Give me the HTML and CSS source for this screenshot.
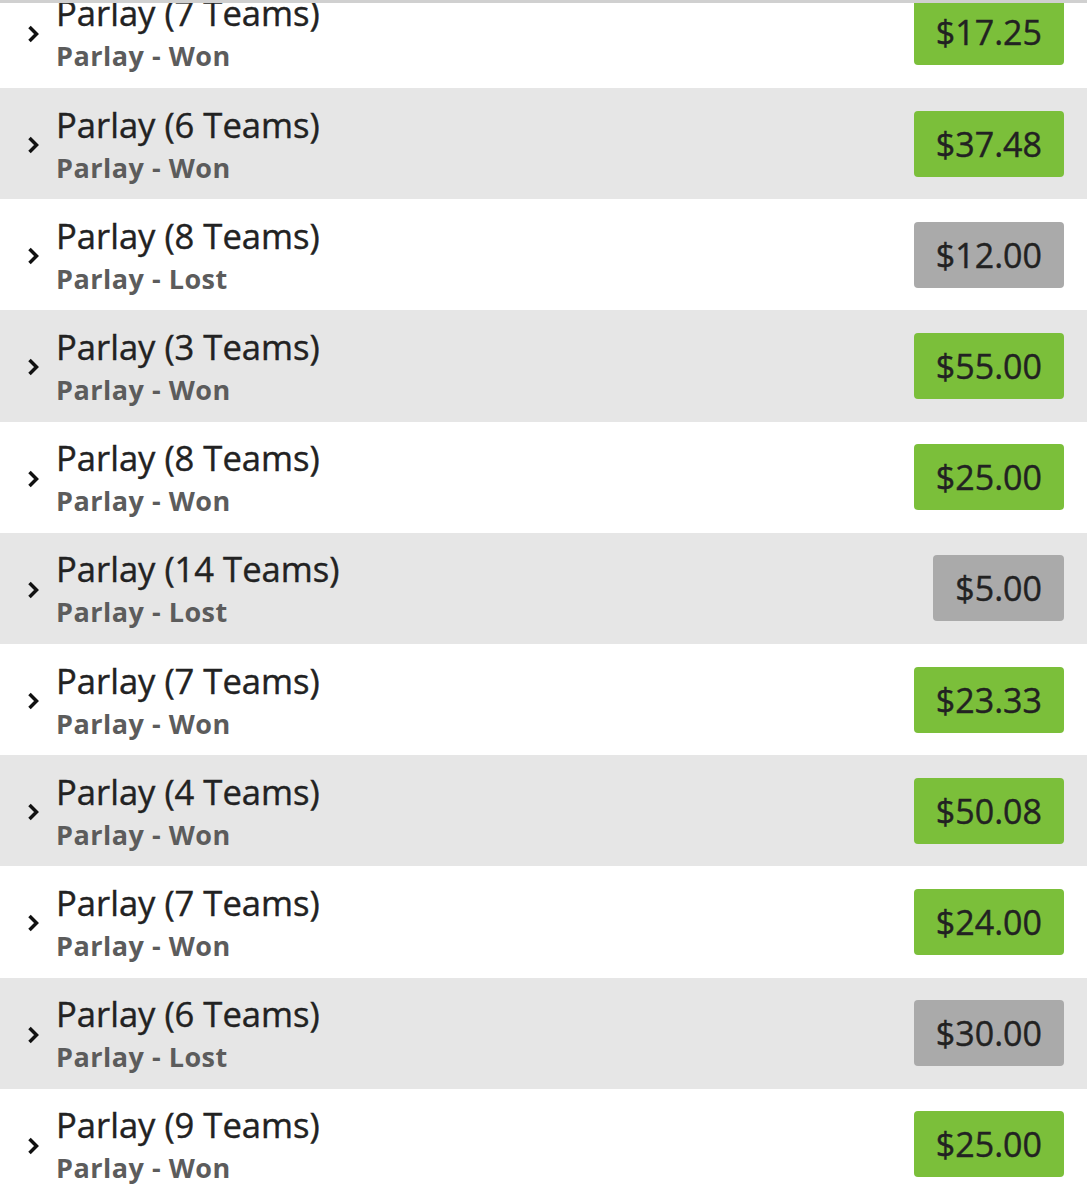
FILE: index.html
```html
<!DOCTYPE html>
<html>
<head>
  <title>Bet History</title>
  <link rel="stylesheet" href="styles.css">
</head>
<body>
  <div class="history">
    <ul class="bets">
      <li class="bet">
        <svg class="chevron" viewBox="0 0 12 18"><path d="M2.5 2 L9.5 9 L2.5 16"/></svg>
        <div class="info"><div class="title">Parlay (7 Teams)</div><div class="status">Parlay - Won</div></div>
        <span class="amount won">$17.25</span>
      </li>
      <li class="bet">
        <svg class="chevron" viewBox="0 0 12 18"><path d="M2.5 2 L9.5 9 L2.5 16"/></svg>
        <div class="info"><div class="title">Parlay (6 Teams)</div><div class="status">Parlay - Won</div></div>
        <span class="amount won">$37.48</span>
      </li>
      <li class="bet">
        <svg class="chevron" viewBox="0 0 12 18"><path d="M2.5 2 L9.5 9 L2.5 16"/></svg>
        <div class="info"><div class="title">Parlay (8 Teams)</div><div class="status">Parlay - Lost</div></div>
        <span class="amount lost">$12.00</span>
      </li>
      <li class="bet">
        <svg class="chevron" viewBox="0 0 12 18"><path d="M2.5 2 L9.5 9 L2.5 16"/></svg>
        <div class="info"><div class="title">Parlay (3 Teams)</div><div class="status">Parlay - Won</div></div>
        <span class="amount won">$55.00</span>
      </li>
      <li class="bet">
        <svg class="chevron" viewBox="0 0 12 18"><path d="M2.5 2 L9.5 9 L2.5 16"/></svg>
        <div class="info"><div class="title">Parlay (8 Teams)</div><div class="status">Parlay - Won</div></div>
        <span class="amount won">$25.00</span>
      </li>
      <li class="bet">
        <svg class="chevron" viewBox="0 0 12 18"><path d="M2.5 2 L9.5 9 L2.5 16"/></svg>
        <div class="info"><div class="title">Parlay (14 Teams)</div><div class="status">Parlay - Lost</div></div>
        <span class="amount lost">$5.00</span>
      </li>
      <li class="bet">
        <svg class="chevron" viewBox="0 0 12 18"><path d="M2.5 2 L9.5 9 L2.5 16"/></svg>
        <div class="info"><div class="title">Parlay (7 Teams)</div><div class="status">Parlay - Won</div></div>
        <span class="amount won">$23.33</span>
      </li>
      <li class="bet">
        <svg class="chevron" viewBox="0 0 12 18"><path d="M2.5 2 L9.5 9 L2.5 16"/></svg>
        <div class="info"><div class="title">Parlay (4 Teams)</div><div class="status">Parlay - Won</div></div>
        <span class="amount won">$50.08</span>
      </li>
      <li class="bet">
        <svg class="chevron" viewBox="0 0 12 18"><path d="M2.5 2 L9.5 9 L2.5 16"/></svg>
        <div class="info"><div class="title">Parlay (7 Teams)</div><div class="status">Parlay - Won</div></div>
        <span class="amount won">$24.00</span>
      </li>
      <li class="bet">
        <svg class="chevron" viewBox="0 0 12 18"><path d="M2.5 2 L9.5 9 L2.5 16"/></svg>
        <div class="info"><div class="title">Parlay (6 Teams)</div><div class="status">Parlay - Lost</div></div>
        <span class="amount lost">$30.00</span>
      </li>
      <li class="bet">
        <svg class="chevron" viewBox="0 0 12 18"><path d="M2.5 2 L9.5 9 L2.5 16"/></svg>
        <div class="info"><div class="title">Parlay (9 Teams)</div><div class="status">Parlay - Won</div></div>
        <span class="amount won">$25.00</span>
      </li>
    </ul>
  </div>
</body>
</html>
```

FILE: styles.css
```css
body {
  margin: 0;
  font-family: "Open Sans", Arial, sans-serif;
  background: #fff;
}

.history {
  height: 1200px;
  overflow: hidden;
  border-top: 3px solid #d0d0d0;
  box-sizing: border-box;
}

.bets {
  list-style: none;
  margin: -26.2px 0 0 0;
  padding: 0;
}

.bet {
  display: flex;
  align-items: center;
  height: 111.2px;
  padding: 0 23px 0 27px;
  box-sizing: border-box;
  background: #fff;
}

.bet:nth-child(even) {
  background: #e6e6e6;
}

.chevron {
  width: 12px;
  height: 18px;
  margin-top: 3px;
  flex: none;
  fill: none;
  stroke: #111;
  stroke-width: 3.5;
}

.info {
  margin-left: 17px;
  padding-top: 2px;
}

.title {
  font-size: 34.6px;
  line-height: 40px;
  color: #222;
  -webkit-text-stroke: 0.4px #222;
}

.status {
  margin-top: 6px;
  font-size: 27px;
  font-weight: bold;
  line-height: 34px;
  letter-spacing: 0.5px;
  color: #5c5c5c;
}

.amount {
  margin-left: auto;
  height: 66px;
  line-height: 66px;
  padding: 0 22px;
  border-radius: 4px;
  font-size: 34px;
  color: #222;
  -webkit-text-stroke: 0.4px #222;
}

.amount.won {
  background: #7bbf3a;
}

.amount.lost {
  background: #aaaaaa;
}
```
